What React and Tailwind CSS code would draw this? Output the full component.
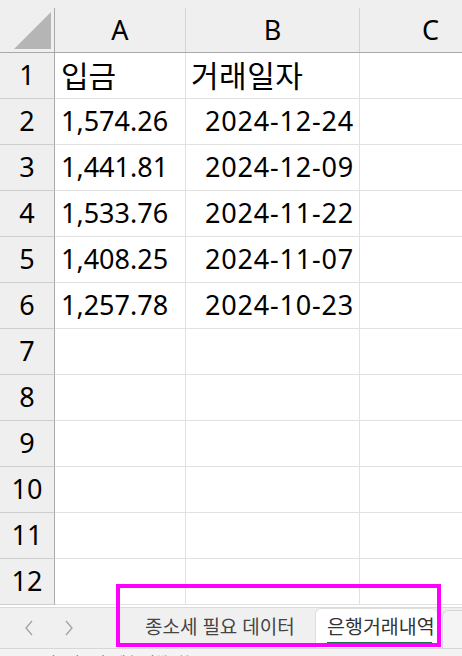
import React from "react";

const rows = [
  { a: "입금", b: "거래일자", head: true },
  { a: "1,574.26", b: "2024-12-24" },
  { a: "1,441.81", b: "2024-12-09" },
  { a: "1,533.76", b: "2024-11-22" },
  { a: "1,408.25", b: "2024-11-07" },
  { a: "1,257.78", b: "2024-10-23" },
  {},
  {},
  {},
  {},
  {},
  {},
];

const Chevron = ({ left }) => (
  <svg width="10" height="16" viewBox="0 0 10 16" fill="none">
    <path
      d={left ? "M8 1 L2 8 L8 15" : "M2 1 L8 8 L2 15"}
      stroke="#a3a3a3"
      strokeWidth="1.3"
    />
  </svg>
);

const App = () => {
  return (
    <div
      className="relative w-[462px] h-[656px] overflow-hidden bg-white text-black"
      style={{ fontFamily: '"Noto Sans", "Noto Sans CJK KR", sans-serif' }}
    >
      {/* column headers */}
      <div className="flex h-[53px] bg-[#efefef] border-b border-[#a9a9a9] text-[27px]">
        <div className="flex shrink-0">
          <div className="w-[54px] pt-[12px] pl-[14px]">
            <svg width="37" height="37" viewBox="0 0 37 37">
              <polygon points="0,37 37,37 37,0" fill="#b5b5b5" />
            </svg>
          </div>
          <div className="w-px mt-2 bg-[#a9a9a9]" />
        </div>
        <div className="mt-2 w-[131px] shrink-0 border-r border-[#d4d4d4] flex items-center justify-center">
          A
        </div>
        <div className="mt-2 w-[174px] shrink-0 border-r border-[#d4d4d4] flex items-center justify-center">
          B
        </div>
        <div className="mt-2 w-[142px] shrink-0 border-r border-[#d4d4d4] flex items-center justify-center">
          C
        </div>
      </div>

      {/* rows */}
      {rows.map((r, i) => (
        <div key={i} className="flex h-[46px] text-[27px]">
          <div className="w-[55px] shrink-0 bg-[#efefef] border-r border-b border-r-[#a9a9a9] border-b-[#cdcdcd] flex items-center justify-center">
            {i + 1}
          </div>
          <div
            className={`w-[131px] shrink-0 border-r border-b border-[#e1e1e1] flex items-center ${
              r.head ? "pl-[6px] text-[30px]" : "pl-[6px]"
            }`}
          >
            {r.a}
          </div>
          <div
            className={`w-[174px] shrink-0 border-r border-b border-[#e1e1e1] flex items-center ${
              r.head
                ? "pl-[5px] text-[30px] tracking-[0.5px]"
                : "justify-end pr-[5px] tracking-[0.8px]"
            }`}
          >
            {r.b}
          </div>
          <div className="w-[142px] shrink-0 border-r border-b border-[#e1e1e1]" />
        </div>
      ))}

      {/* sheet tabs */}
      <div className="mt-[2px] flex h-[41px] border-t border-[#dadada] bg-[#f0f0f0]">
        <div className="w-[98px] shrink-0 flex items-center pl-[24px] gap-[30px]">
          <Chevron left />
          <Chevron />
        </div>
        <div className="w-[214px] shrink-0 flex items-center pl-[47px] pb-[2px] text-[19px] text-[#444]">
          종소세 필요 데이터
        </div>
        <div className="w-px h-[20px] self-center bg-[#d0d0d0]" />
        <div className="ml-[3px] w-[122px] shrink-0 bg-white rounded-t-[6px] border-l border-t border-[#dedede] flex flex-col justify-center pl-[11px] pt-[2px]">
          <span className="text-[19.5px] leading-[24px] text-[#333] whitespace-nowrap">은행거래내역</span>
          <div className="mt-[3px] h-[2px] w-[105px] bg-[#1e7145]" />
        </div>
        <div className="ml-[5px] w-[30px] shrink-0 mt-[2px] rounded-tl-[6px] border-l border-t border-[#d6d6d6] bg-[#f4f4f4]" />
      </div>

      {/* status bar, cut off */}
      <div className="h-[10px] overflow-hidden border-t border-[#d6d6d6] bg-[#f3f3f3] pl-[30px] pt-[3px] text-[14px] leading-[20px] text-[#555]">
        준비 &nbsp; 접근성: 계속 진행 가능
      </div>

      {/* annotation box */}
      <div className="absolute left-[116px] top-[584px] w-[325px] h-[63px] border-4 border-[#ff00ff]" />
    </div>
  );
};

export default App;
